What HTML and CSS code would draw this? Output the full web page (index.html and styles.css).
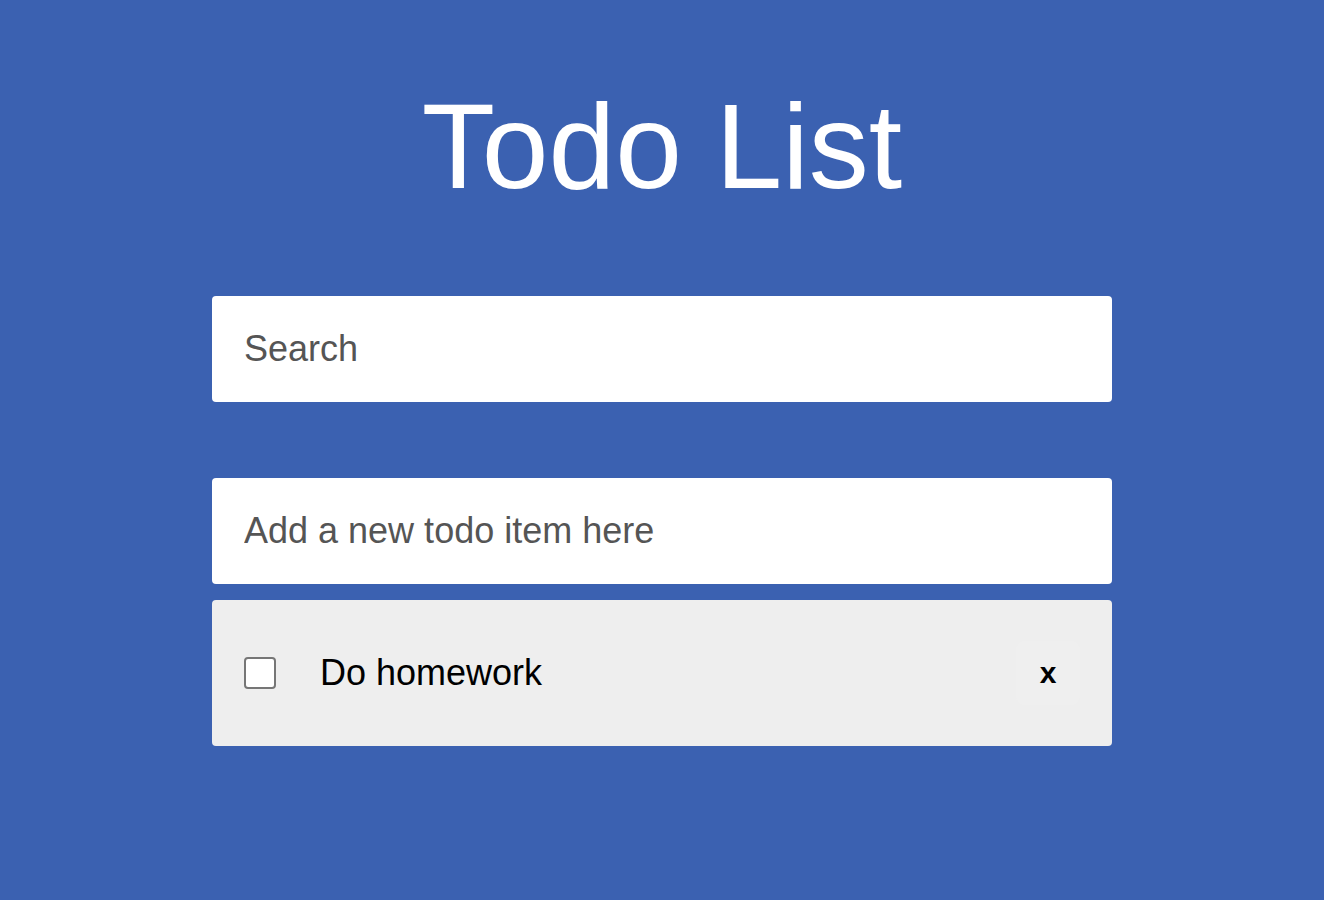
FILE: index.html
```html
<!DOCTYPE html>
<html lang="en">
<head>
<meta charset="utf-8">
<title>Todo List</title>
<link rel="stylesheet" href="styles.css">
</head>
<body>
<main class="app">
  <h1 class="title">Todo List</h1>
  <input class="field search" type="text" placeholder="Search">
  <div class="list-area">
    <input class="field add" type="text" placeholder="Add a new todo item here">
    <ul class="todos">
      <li class="todo">
        <input class="check" type="checkbox">
        <span class="todo-text">Do homework</span>
        <button class="remove" type="button">x</button>
      </li>
    </ul>
  </div>
</main>
</body>
</html>
```
FILE: styles.css
```css
html, body {
  margin: 0;
  padding: 0;
  background: #3b61b1;
  height: 100%;
}
body {
  font-family: "Liberation Sans", Arial, sans-serif;
}
.app {
  width: 900px;
  margin: 0 auto;
  display: flex;
  flex-direction: column;
}
.title {
  margin: 78px 0 81px;
  height: 137px;
  font-size: 120px;
  line-height: 137px;
  font-weight: 400;
  color: #ffffff;
  text-align: center;
}
.field {
  box-sizing: border-box;
  width: 100%;
  height: 106px;
  margin: 0;
  padding: 0 32px;
  border: none;
  border-radius: 4px;
  background: #ffffff;
  font-family: "Liberation Sans", Arial, sans-serif;
  font-size: 36px;
  color: #000;
  outline: none;
}
.field::placeholder {
  color: #555555;
  opacity: 1;
}
.list-area {
  margin-top: 76px;
  display: flex;
  flex-direction: column;
  gap: 16px;
}
.todos {
  list-style: none;
  margin: 0;
  padding: 0;
}
.todo {
  box-sizing: border-box;
  height: 146px;
  padding: 0 32px;
  background: #eeeeee;
  border-radius: 4px;
  display: flex;
  align-items: center;
}
.check {
  appearance: none;
  -webkit-appearance: none;
  box-sizing: border-box;
  width: 32px;
  height: 32px;
  margin: 0 44px 0 0;
  border: 2px solid #767676;
  border-radius: 4px;
  background: #ffffff;
  flex: none;
}
.todo-text {
  flex: 1;
  font-size: 36px;
  color: #000000;
}
.remove {
  width: 64px;
  height: 64px;
  border: none;
  border-radius: 8px;
  background: #efefef;
  font-family: "Liberation Sans", Arial, sans-serif;
  font-size: 30px;
  font-weight: 700;
  color: #000;
  padding: 0;
  cursor: pointer;
}
```
